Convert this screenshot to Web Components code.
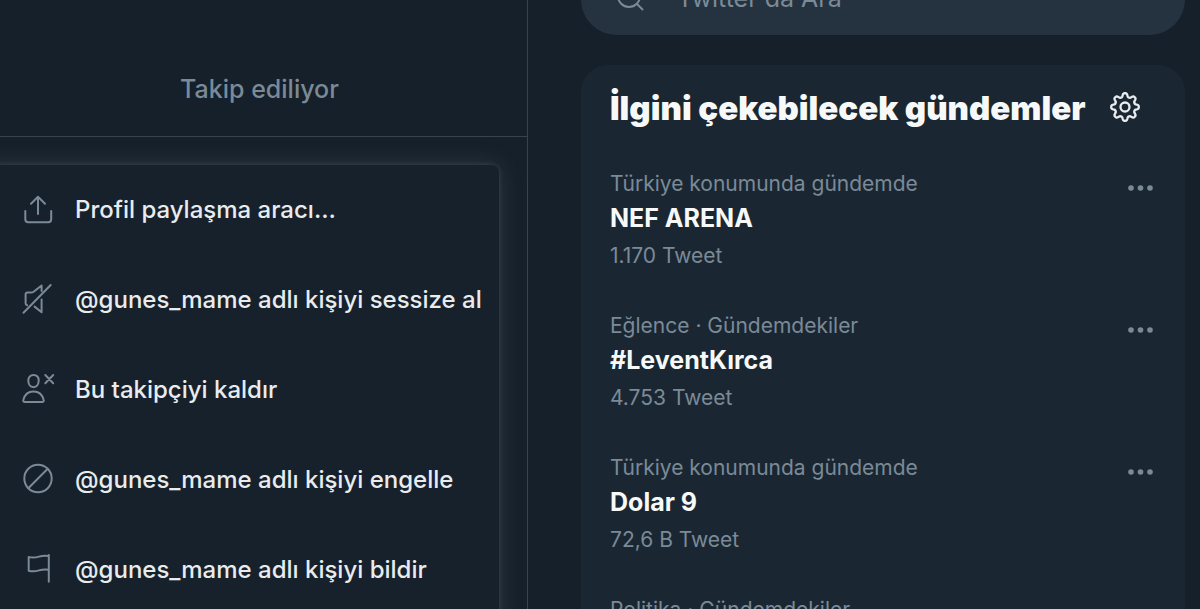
<!DOCTYPE html>
<html lang="tr">
<head>
<meta charset="utf-8">
<title>Twitter</title>
<style>
html, body { margin: 0; height: 100%; overflow: hidden; background: #16202a; }
body { font-family: Inter, "Liberation Sans", sans-serif; font-size: 24px; color: #e8ecef; --muted: #7b8a97; }
</style>
</head>
<body>
<app-shell>
  <profile-column slot="main">
    <menu-item icon="share">Profil paylaşma aracı…</menu-item>
    <menu-item icon="mute">@gunes_mame adlı kişiyi sessize al</menu-item>
    <menu-item icon="remove">Bu takipçiyi kaldır</menu-item>
    <menu-item icon="block">@gunes_mame adlı kişiyi engelle</menu-item>
    <menu-item icon="flag">@gunes_mame adlı kişiyi bildir</menu-item>
  </profile-column>
  <search-box slot="side"></search-box>
  <trends-card slot="side">
    <span slot="title">İlgini çekebilecek gündemler</span>
    <trend-item><span slot="topic">Türkiye konumunda gündemde</span><span slot="name">NEF ARENA</span><span slot="count">1.170 Tweet</span></trend-item>
    <trend-item><span slot="topic">Eğlence · Gündemdekiler</span><span slot="name">#LeventKırca</span><span slot="count">4.753 Tweet</span></trend-item>
    <trend-item><span slot="topic">Türkiye konumunda gündemde</span><span slot="name">Dolar 9</span><span slot="count">72,6 B Tweet</span></trend-item>
    <trend-item><span slot="topic">Politika · Gündemdekiler</span></trend-item>
  </trends-card>
</app-shell>
<script>
const define = (name, html, setup) => customElements.define(name, class extends HTMLElement {
  constructor() {
    super();
    this.attachShadow({ mode: 'open' }).innerHTML = html;
  }
  connectedCallback() { if (setup) setup(this, this.shadowRoot); }
});

const icons = {
  share: '<path d="M16 20V3M9 9.7l7-7 7 7M3.3 17v8.2a3 3 0 0 0 3 3h19.9a3 3 0 0 0 3-3V17"/>',
  mute: '<path d="M28.7 1L1.5 28.7M19.6 7V1.5l-8 6.3a4 4 0 0 1-2.4.8H5.6a2 2 0 0 0-2 2v8.6a2 2 0 0 0 1.6 2M19.6 15.6v12.6l-7-5.6"/>',
  remove: '<path d="M11.500 1c3.400 0 5.200 2.300 5.200 5.500 0 3.600-1.800 6.700-5.200 6.700s-5.200-3.100-5.200-6.700C6.300 3.300 8.100 1 11.500 1zM11.500 17.400c5.500 0 9 3.500 10.200 8.600.3 1.100-.4 2-1.500 2H2.800c-1.100 0-1.800-.9-1.500-2 1.200-5.100 4.700-8.600 10.200-8.600zM23.300 1l7.900 8.300M31.200 1l-7.900 8.300"/>',
  block: '<circle cx="16" cy="14.500" r="13.700"/><path d="M25.700 4.800L6.300 24.200"/>',
  flag: '<path d="M26.800 1v26.700M26.800 2c-3.500-.7-6.500-.4-9.800.6-3.300 1-6.600 1.400-10.300.3v13.800c3.700 1.100 7 .7 10.300-.3 3.300-1 6.300-1.300 9.800-.6"/>'
};

/* Rounded eight-tooth gear outline, centred on 0,0 */
const gear = () => {
  let d = '';
  for (let i = 0; i < 160; i++) {
    const a = i / 160 * Math.PI * 2;
    const r = 12 + 1.8 * Math.tanh(1.6 * Math.cos(8 * a)) / Math.tanh(1.6);
    d += (i ? 'L' : 'M') + (r * Math.cos(a)).toFixed(2) + ' ' + (r * Math.sin(a)).toFixed(2);
  }
  return d + 'Z';
};

define('app-shell', `
<style>
:host { display: grid; grid-template-columns: 44% minmax(0, 1fr); height: 100vh; overflow: hidden; }
main { border-right: 1px solid #38444d; overflow: hidden; }
aside { padding: 0 15px 0 53px; overflow: hidden; }
</style>
<main><slot name="main"></slot></main>
<aside><slot name="side"></slot></aside>`);

define('profile-column', `
<style>
:host { display: block; }
nav { display: flex; justify-content: center; padding: 72px 8px 30px 0; border-bottom: 1px solid #38444d; }
a { color: var(--muted); text-decoration: none; font-size: 25px; font-weight: 500; line-height: 34px; }
.menu { margin: 28px 28px 0 -20px; padding-bottom: 40px; border-radius: 7px; background: #17212b;
  box-shadow: 0 0 25px rgba(136, 153, 166, .2), 0 0 5px rgba(136, 153, 166, .25); }
</style>
<nav><a href="#">Takip ediliyor</a></nav>
<div class="menu" role="menu"><slot></slot></div>`);

define('menu-item', `
<style>
:host { display: block; }
button { display: flex; align-items: center; gap: 21px; width: 100%; height: 90px; padding: 0 0 2px 42px;
  border: 0; background: none; color: inherit; font: inherit; font-weight: 500; text-align: left; white-space: nowrap; }
svg { flex: none; width: 32px; height: 32px; overflow: visible; fill: none; stroke: var(--muted); stroke-width: 2; stroke-linecap: round; stroke-linejoin: round; }
</style>
<button role="menuitem"><svg viewBox="0 -1 32 32" aria-hidden="true"></svg><span><slot></slot></span></button>`,
(host, root) => { root.querySelector('svg').innerHTML = icons[host.getAttribute('icon')]; });

define('search-box', `
<style>
:host { display: block; margin: -36px 0 30px; }
label { display: flex; align-items: center; gap: 33px; box-sizing: border-box; height: 71px; padding: 0 35px 3px; border-radius: 36px; background: #253341; }
svg { flex: none; width: 28px; height: 28px; fill: none; stroke: var(--muted); stroke-width: 2; stroke-linecap: round; }
input { flex: 1; min-width: 0; height: 34px; padding: 0; border: 0; outline: 0; background: none; color: inherit; font: inherit; font-size: 25px; }
input::placeholder { color: var(--muted); opacity: 1; }
</style>
<label><svg viewBox="0 0 28 28" aria-hidden="true"><circle cx="13" cy="12" r="11"/><path d="M21 20l5.500 5.500"/></svg>
<input type="search" placeholder="Twitter'da Ara" aria-label="Twitter'da Ara"></label>`);

define('trends-card', `
<style>
:host { display: block; border-radius: 27px; background: #1a2733; }
header { display: flex; align-items: center; justify-content: space-between; height: 85px; padding: 0 44px 0 29px; }
h2 { margin: 0; color: #f7f9f9; font-size: 33px; line-height: 40px; font-weight: 900; white-space: nowrap; }
button { display: flex; padding: 0; border: 0; background: none; }
svg { width: 32px; height: 32px; fill: none; stroke: #e8ecef; stroke-width: 2.3; stroke-linejoin: round; }
</style>
<header><h2><slot name="title"></slot></h2>
<button aria-label="Ayarlar"><svg viewBox="-16 -15 32 32"><path d="${gear()}"/><circle r="4.500"/></svg></button></header>
<slot></slot>`);

define('trend-item', `
<style>
:host { display: flex; justify-content: space-between; align-items: flex-start; padding: 20px 31px 22px 29px; }
p { margin: 0; color: var(--muted); font-size: 21px; line-height: 28px; min-height: 28px; }
.name { margin: 3px 0 7px; color: #f7f9f9; font-size: 25px; line-height: 34px; min-height: 34px; font-weight: 700; }
button { display: flex; margin-top: 12px; padding: 0; border: 0; background: none; }
svg { width: 28px; height: 12px; fill: var(--muted); }
</style>
<div><p><slot name="topic"></slot></p><p class="name"><slot name="name"></slot></p><p><slot name="count"></slot></p></div>
<button aria-label="Daha fazla"><svg viewBox="0 0 28 12"><circle cx="5" cy="6" r="2.800"/><circle cx="14.500" cy="6" r="2.800"/><circle cx="24" cy="6" r="2.800"/></svg></button>`);
</script>
</body>
</html>
